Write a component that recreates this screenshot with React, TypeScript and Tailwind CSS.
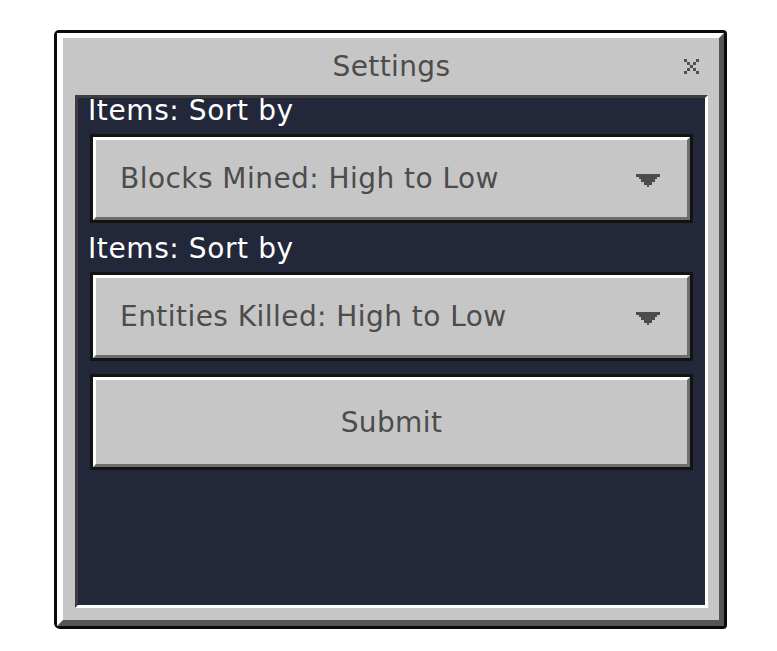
import React from "react";

function Arrow() {
  return (
    <svg
      width="24"
      height="13.33"
      viewBox="0 0 9 5"
      shapeRendering="crispEdges"
      className="mt-[4px]"
    >
      <path
        d="M0 0H9V1H8V2H7V3H6V4H5V5H4V4H3V3H2V2H1V1H0Z"
        fill="#4c4c4c"
      />
    </svg>
  );
}

function CloseIcon() {
  return (
    <svg
      width="15"
      height="15"
      viewBox="0 0 5 5"
      shapeRendering="crispEdges"
      className="absolute right-[9px] top-[21px]"
    >
      <path
        d="M0 0H1V1H0Z M1 1H2V2H1Z M2 2H3V3H2Z M3 3H4V4H3Z M4 4H5V5H4Z M4 0H5V1H4Z M3 1H4V2H3Z M1 3H2V4H1Z M0 4H1V5H0Z"
        fill="#505050"
      />
    </svg>
  );
}

function Dropdown({ text }: { text: string }) {
  return (
    <div className="h-[89px] border-[3px] border-[#131313]">
      <div className="h-full border-[3px] border-t-white border-l-white border-r-[#6d6d6d] border-b-[#6d6d6d] bg-[#c6c6c6] flex items-center justify-between pl-[24px] pr-[27px]">
        <span className="text-[28px] leading-[25px] tracking-[0.45px] text-[#4c4c4c]">{text}</span>
        <Arrow />
      </div>
    </div>
  );
}

function Label({ text }: { text: string }) {
  return (
    <div className="h-[36px] ml-[-2px]">
      <span className="text-[28px] leading-[25px] tracking-[0.6px] text-white">{text}</span>
    </div>
  );
}

export default function App() {
  return (
    <div className="w-[777px] h-[651px] bg-white pt-[30px] pl-[54px] font-['DejaVu_Sans',sans-serif]">
      <div className="w-[673px] h-[599px] border-[3px] border-[#0a0a0a] rounded-tl-[5px] rounded-tr-[4px] rounded-bl-[6px] rounded-br-[4px]">
        <div className="h-full border-t-[5px] border-l-[6px] border-r-[5px] border-b-[6px] border-t-white border-l-white border-r-[#555555] border-b-[#555555] bg-[#c6c6c6] flex flex-col pl-[12px] pr-[11px] pb-[12px]">
          <div className="relative h-[57px] flex items-center justify-center">
            <span className="text-[28px] leading-[25px] tracking-[0.4px] text-[#4c4c4c]">Settings</span>
            <CloseIcon />
          </div>
          <div className="flex-1 border-[3px] border-t-[#3d3d3d] border-l-[#3d3d3d] border-r-white border-b-white bg-[#22273a] flex flex-col px-[12px] gap-[13px]">
            <div className="flex flex-col">
              <Label text="Items: Sort by" />
              <Dropdown text="Blocks Mined: High to Low" />
            </div>
            <div className="flex flex-col">
              <Label text="Items: Sort by" />
              <Dropdown text="Entities Killed: High to Low" />
            </div>
            <div className="h-[96px] border-[3px] border-[#131313]">
              <div className="h-full border-[3px] border-t-white border-l-white border-r-[#6d6d6d] border-b-[#6d6d6d] bg-[#c6c6c6] flex items-center justify-center">
                <span className="text-[28px] leading-[25px] tracking-[0.4px] text-[#4c4c4c]">Submit</span>
              </div>
            </div>
          </div>
        </div>
      </div>
    </div>
  );
}
